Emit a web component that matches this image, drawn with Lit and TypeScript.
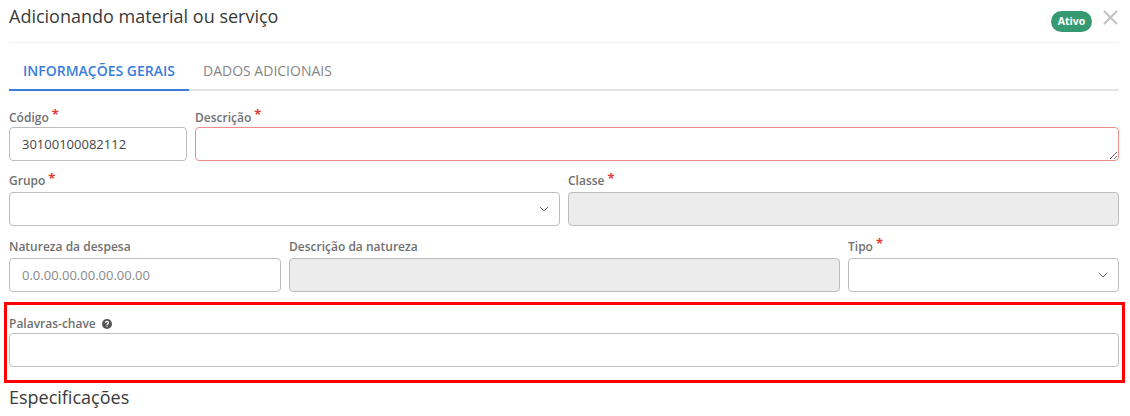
import { LitElement, html, css, svg } from "lit";
import { customElement } from "lit/decorators.js";

const chevron = svg`<svg class="chev" width="10" height="6" viewBox="0 0 10 6"><path d="M.8.8 5 5 9.2.8" fill="none" stroke="#6a6a6a" stroke-width="1"/></svg>`;

@customElement("app-root")
export class AppRoot extends LitElement {
  static styles = css`
    :host { display: block; position: relative; width: 1130px; height: 416px; overflow: hidden; background: #fff; font-family: "Open Sans", sans-serif; color: #333; }
    * { box-sizing: border-box; }
    .page { padding: 0 11px 0 9px; }
    .head { height: 43px; border-bottom: 1px solid #f2f2f2; display: flex; align-items: flex-start; justify-content: space-between; }
    .title { font-size: 18px; line-height: 24px; margin-top: 4px; color: #3a3a3a; }
    .status { display: flex; align-items: flex-start; margin-top: 11px; margin-right: 1px; gap: 11px; }
    .badge { width: 41px; height: 21px; border-radius: 11px; background: #359a72; color: #fff; font-size: 10.5px; font-weight: 700; line-height: 21px; text-align: center; }
    .close { display: block; margin-top: -1px; }
    .tabs { display: flex; height: 48px; border-bottom: 2px solid #e2e2e2; margin-bottom: 13px; }
    .tab { font-size: 14px; line-height: 20px; padding: 18px 14px 0; color: #858585; height: 48px; font-weight: 400; }
    .tab.on { color: #3b7ddd; font-weight: 600; border-bottom: 2px solid #3b7ddd; width: 180px; padding-right: 0; }
    .tab.off { padding-left: 14px; }
    .row { display: grid; gap: 8px; }
    .r1 { grid-template-columns: 178px 1fr; margin-bottom: 8px; }
    .r2 { grid-template-columns: 551px 1fr; margin-bottom: 9px; }
    .r3 { grid-template-columns: 272px 1fr 271px; margin-bottom: 18px; }
    .r4 { grid-template-columns: 1fr; margin-bottom: 18px; }
    label { display: flex; align-items: flex-start; height: 23px; font-size: 12px; line-height: 16px; font-weight: 600; color: #707070; padding-top: 6px; gap: 3px; }
    .r2 label, .r3 label { padding-top: 4px; }
    .req { color: #e53935; font-size: 13px; line-height: 12px; margin-top: -2px; font-weight: 700; }
    .r2 .req { margin-top: -1px; }
    .help { margin: 3px 0 0 3px; }
    input, textarea, .select { display: block; width: 100%; height: 34px; border: 1px solid #bdbdbd; border-radius: 4px; background: #fff; font: 13px/20px "Open Sans", sans-serif; color: #444; padding: 6px 12px; outline: none; margin: 0; }
    input::placeholder { color: #8a8a8a; opacity: 1; }
    textarea { border-color: #ef8d8d; resize: vertical; }
    input:disabled { background: #ececec; }
    .select { display: flex; align-items: center; justify-content: flex-end; padding-right: 10px; }
    .sub { font-size: 18px; line-height: 24px; color: #3a3a3a; margin: 0; font-weight: 400; }
    .mark { position: absolute; left: 4px; top: 302px; width: 1121px; height: 81px; border: 3px solid #f00; pointer-events: none; }
  `;

  render() {
    return html`
      <div class="page">
        <header class="head">
          <div class="title">Adicionando material ou serviço</div>
          <div class="status">
            <span class="badge">Ativo</span>
            <svg class="close" width="15" height="15" viewBox="0 0 15 15"><path d="M1 1 14 14M14 1 1 14" stroke="#c4c4c4" stroke-width="2.2" fill="none"/></svg>
          </div>
        </header>
        <nav class="tabs">
          <div class="tab on">INFORMAÇÕES GERAIS</div>
          <div class="tab off">DADOS ADICIONAIS</div>
        </nav>
        <div class="row r1">
          <div><label>Código <span class="req">*</span></label><input value="30100100082112" /></div>
          <div><label>Descrição <span class="req">*</span></label><textarea></textarea></div>
        </div>
        <div class="row r2">
          <div><label>Grupo <span class="req">*</span></label><div class="select">${chevron}</div></div>
          <div><label>Classe <span class="req">*</span></label><input disabled /></div>
        </div>
        <div class="row r3">
          <div><label>Natureza da despesa</label><input placeholder="0.0.00.00.00.00.00.00" /></div>
          <div><label>Descrição da natureza</label><input disabled /></div>
          <div><label>Tipo <span class="req">*</span></label><div class="select">${chevron}</div></div>
        </div>
        <div class="row r4">
          <div>
            <label>Palavras-chave
              <svg class="help" width="10" height="10" viewBox="0 0 10 10"><circle cx="5" cy="5" r="5" fill="#555"/><path d="M3.4 3.9C3.5 2.9 4.1 2.4 5 2.4 6 2.4 6.6 3 6.6 3.7 6.6 4.7 5 4.8 5 6" fill="none" stroke="#fff" stroke-width="1.2"/><rect x="4.4" y="6.7" width="1.2" height="1.2" fill="#fff"/></svg>
            </label>
            <input />
          </div>
        </div>
        <h2 class="sub">Especificações</h2>
      </div>
      <div class="mark"></div>
    `;
  }
}
